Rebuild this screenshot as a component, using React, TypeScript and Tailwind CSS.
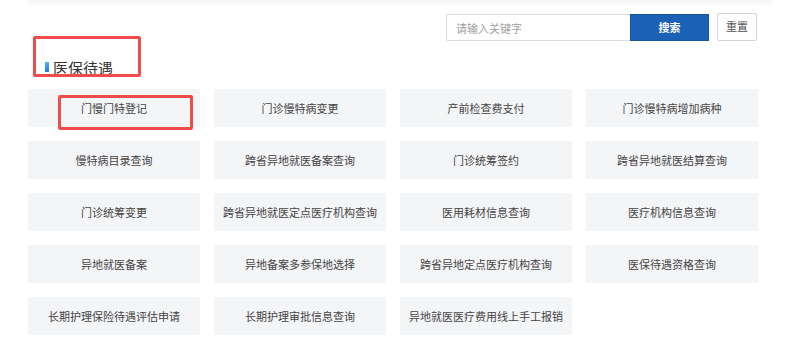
import React from 'react'

const items = [
  '门慢门特登记',
  '门诊慢特病变更',
  '产前检查费支付',
  '门诊慢特病增加病种',
  '慢特病目录查询',
  '跨省异地就医备案查询',
  '门诊统筹签约',
  '跨省异地就医结算查询',
  '门诊统筹变更',
  '跨省异地就医定点医疗机构查询',
  '医用耗材信息查询',
  '医疗机构信息查询',
  '异地就医备案',
  '异地备案多参保地选择',
  '跨省异地定点医疗机构查询',
  '医保待遇资格查询',
  '长期护理保险待遇评估申请',
  '长期护理审批信息查询',
  '异地就医医疗费用线上手工报销',
]

const font = { fontFamily: '"Noto Sans CJK SC", "Noto Sans", sans-serif' }

const App = () => {
  return (
    <div className="relative w-[800px] h-[352px] bg-white overflow-hidden" style={font}>
      {/* bottom edge of the card above */}
      <div className="mx-[28px] h-[6px] bg-gradient-to-b from-[#f6f6f6] to-white" />

      <div className="flex justify-end items-center pr-[43px] mt-[8px] gap-[8px]">
        <div className="flex h-[27px]">
          <input
            type="text"
            placeholder="请输入关键字"
            className="w-[184px] h-[27px] border border-[#dcdcdc] border-r-0 rounded-l-[2px] px-[9px] text-[11px] text-[#333] placeholder:text-[#a0a0a0] outline-none"
            style={font}
          />
          <button className="w-[79px] h-[27px] bg-[#1b62b6] text-white text-[11px] font-bold border border-[#17569f]">
            搜索
          </button>
        </div>
        <button className="w-[40px] h-[28px] -mt-[2px] border border-[#d4d4d4] rounded-[2px] bg-white text-[11px] text-[#555]">
          重置
        </button>
      </div>

      <div className="flex items-center ml-[45px] mt-[15px] h-[22px] gap-[4px]">
        <span className="w-[4px] h-[10px] bg-gradient-to-b from-[#4fb2f0] to-[#1f7ed6]" />
        <span className="text-[15px] text-[#333] leading-none">医保待遇</span>
      </div>

      <div className="grid grid-cols-4 gap-[14px] w-[730px] ml-[28px] mt-[11px]">
        {items.map((item) => (
          <div
            key={item}
            className="h-[38px] bg-[#f4f5f7] flex items-center justify-center text-[11px] text-[#444]"
          >
            {item}
          </div>
        ))}
      </div>

      {/* red annotation boxes */}
      <div className="absolute left-[33px] top-[36px] w-[108px] h-[41px] border-[3px] border-[#f24b4b] rounded-[2px]" />
      <div className="absolute left-[58px] top-[95px] w-[135px] h-[35px] border-[3px] border-[#f24b4b] rounded-[2px]" />
    </div>
  )
}

export default App
